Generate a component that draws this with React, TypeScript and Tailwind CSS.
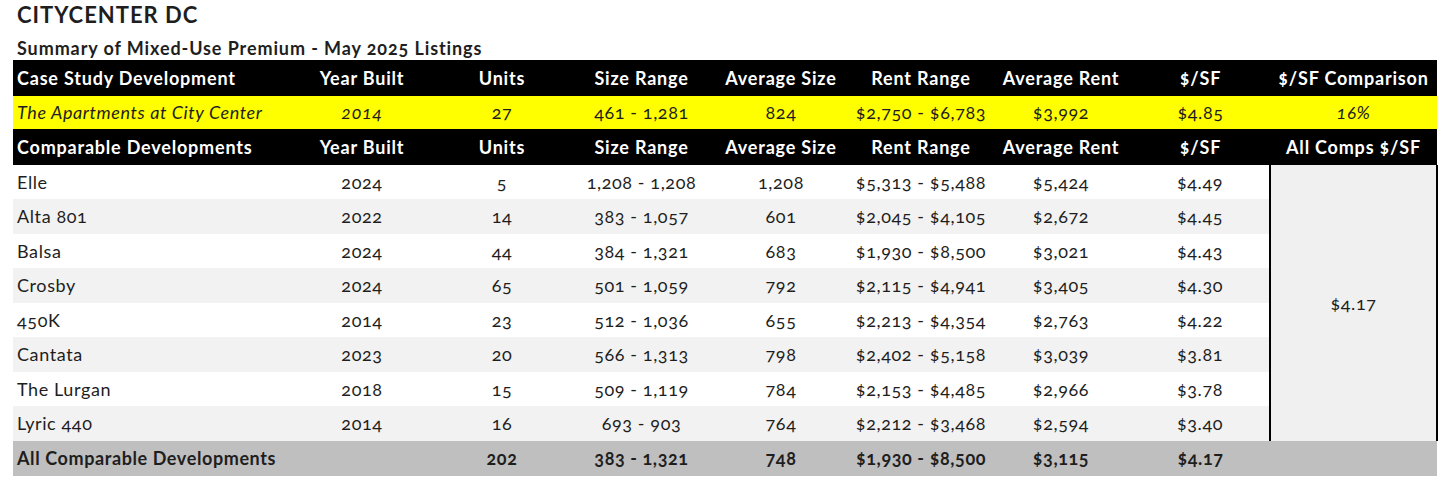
import React from 'react'

const font = { fontFamily: 'Lato, "Open Sans", sans-serif' }

const heads1 = ['Case Study Development', 'Year Built', 'Units', 'Size Range', 'Average Size', 'Rent Range', 'Average Rent', '$/SF', '$/SF Comparison']
const heads2 = ['Comparable Developments', 'Year Built', 'Units', 'Size Range', 'Average Size', 'Rent Range', 'Average Rent', '$/SF', 'All Comps $/SF']

const comps = [
    ['Elle', '2024', '5', '1,208 - 1,208', '1,208', '$5,313 - $5,488', '$5,424', '$4.49'],
    ['Alta 801', '2022', '14', '383 - 1,057', '601', '$2,045 - $4,105', '$2,672', '$4.45'],
    ['Balsa', '2024', '44', '384 - 1,321', '683', '$1,930 - $8,500', '$3,021', '$4.43'],
    ['Crosby', '2024', '65', '501 - 1,059', '792', '$2,115 - $4,941', '$3,405', '$4.30'],
    ['450K', '2014', '23', '512 - 1,036', '655', '$2,213 - $4,354', '$2,763', '$4.22'],
    ['Cantata', '2023', '20', '566 - 1,313', '798', '$2,402 - $5,158', '$3,039', '$3.81'],
    ['The Lurgan', '2018', '15', '509 - 1,119', '784', '$2,153 - $4,485', '$2,966', '$3.78'],
    ['Lyric 440', '2014', '16', '693 - 903', '764', '$2,212 - $3,468', '$2,594', '$3.40'],
]

const widths = [279, 140, 140, 139, 140, 140, 140, 139, 167]

const HeadRow = ({ cells }: { cells: string[] }) => (
    <tr className="h-[36px] bg-black text-white font-bold text-[18px] tracking-[0.8px]">
        {cells.map((c, i) => (
            <th key={i} className={i === 0 ? 'text-left pl-[4px] font-bold whitespace-nowrap' : 'text-center font-bold whitespace-nowrap'}>
                {c}
            </th>
        ))}
    </tr>
)

export default function App() {
    return (
        <div className="bg-white w-[1444px] h-[485px] text-[#1e1e1e] oldstyle-nums" style={font}>
            <div className="pl-[17px] pt-[1px] text-[22px] font-bold leading-[27px] tracking-[1px]">CITYCENTER DC</div>
            <div className="pl-[17px] pt-[8px] text-[18px] font-bold leading-[24px] tracking-[0.9px]">
                Summary of Mixed-Use Premium - May 2025 Listings
            </div>
            <table className="ml-[13px] table-fixed border-collapse w-[1424px]">
                <colgroup>
                    {widths.map((w, i) => (
                        <col key={i} style={{ width: w }} />
                    ))}
                </colgroup>
                <tbody>
                    <HeadRow cells={heads1} />
                    <tr className="h-[33px] bg-[#ffff00] text-[18px] tracking-[0.6px] whitespace-nowrap">
                        <td className="pl-[4px] italic">The Apartments at City Center</td>
                        <td className="text-center italic">2014</td>
                        <td className="text-center">27</td>
                        <td className="text-center">461 - 1,281</td>
                        <td className="text-center">824</td>
                        <td className="text-center">$2,750 - $6,783</td>
                        <td className="text-center">$3,992</td>
                        <td className="text-center">$4.85</td>
                        <td className="text-center italic">16%</td>
                    </tr>
                    <HeadRow cells={heads2} />
                    {comps.map((r, i) => (
                        <tr
                            key={i}
                            className={
                                (i % 2 === 0 ? 'h-[34px] bg-white' : 'h-[35px] bg-[#f2f2f2]') +
                                ' text-[18px] tracking-[0.6px] whitespace-nowrap'
                            }
                        >
                            {r.map((c, j) => (
                                <td key={j} className={j === 0 ? 'pl-[4px]' : 'text-center'}>
                                    {c}
                                </td>
                            ))}
                            {i === 0 && (
                                <td
                                    rowSpan={8}
                                    className="text-center bg-[#f0f0f0] border-x-2 border-black"
                                >
                                    $4.17
                                </td>
                            )}
                        </tr>
                    ))}
                    <tr className="h-[35px] bg-[#bfbfbf] font-bold text-[18px] tracking-[0.6px] whitespace-nowrap">
                        <td className="pl-[4px]">All Comparable Developments</td>
                        <td></td>
                        <td className="text-center">202</td>
                        <td className="text-center">383 - 1,321</td>
                        <td className="text-center">748</td>
                        <td className="text-center">$1,930 - $8,500</td>
                        <td className="text-center">$3,115</td>
                        <td className="text-center">$4.17</td>
                        <td></td>
                    </tr>
                </tbody>
            </table>
        </div>
    )
}
